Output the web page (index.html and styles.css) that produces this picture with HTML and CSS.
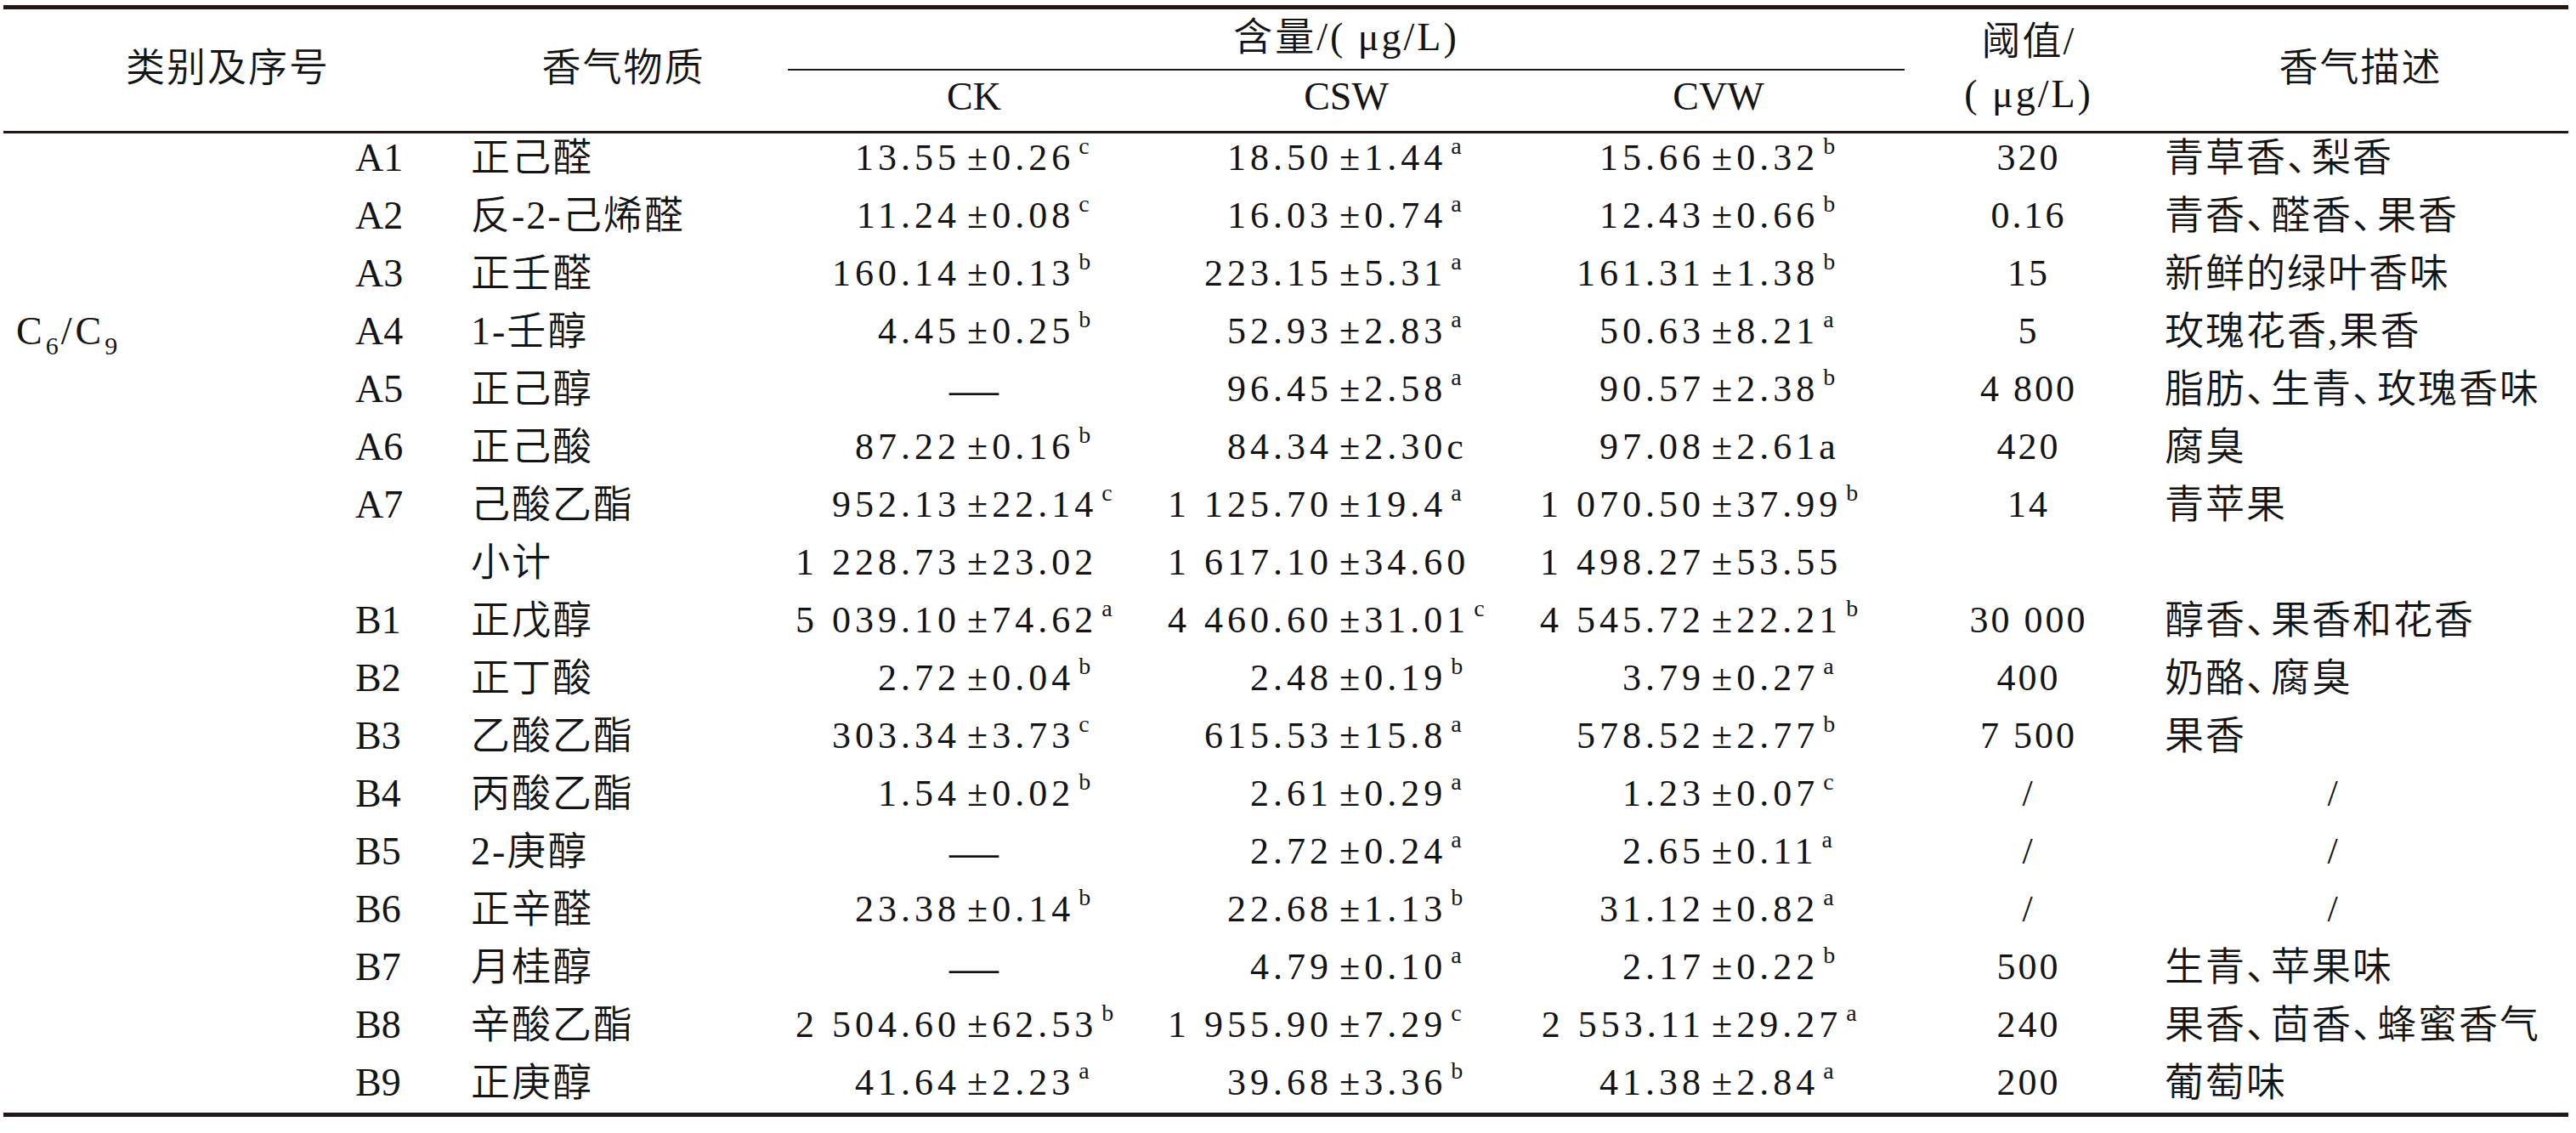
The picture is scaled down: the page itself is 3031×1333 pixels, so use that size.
FILE: index.html
```html
<!DOCTYPE html>
<html lang="zh-CN">
<head>
<meta charset="utf-8">
<title>香气物质含量</title>
<link rel="stylesheet" href="styles.css">
</head>
<body>
<div class="sheet">
  <div class="thead">
    <div class="th h-cat">类别及序号</div>
    <div class="th h-name">香气物质</div>
    <div class="th h-group"><span>含量/( μg/L)</span></div>
    <div class="th h-thr"><span>阈值/</span><span class="unit">( μg/L)</span></div>
    <div class="th h-desc">香气描述</div>
    <div class="th h-sub c-ck">CK</div>
    <div class="th h-sub c-csw">CSW</div>
    <div class="th h-sub c-cvw">CVW</div>
  </div>

  <div class="tbody">
    <div class="td cat"><span class="formula">C<sub>6</sub>/C<sub>9</sub></span></div>

    <div class="tr">
      <div class="td seq">A1</div><div class="td name">正己醛</div>
      <div class="td num c-ck"><span class="lhs">13.55</span><span class="rhs">±0.26<sup>c</sup></span></div>
      <div class="td num c-csw"><span class="lhs">18.50</span><span class="rhs">±1.44<sup>a</sup></span></div>
      <div class="td num c-cvw"><span class="lhs">15.66</span><span class="rhs">±0.32<sup>b</sup></span></div>
      <div class="td thr">320</div><div class="td desc"><span>青草香<span class="dun">、</span>梨香</span></div>
    </div>
    <div class="tr">
      <div class="td seq">A2</div><div class="td name">反-2-己烯醛</div>
      <div class="td num c-ck"><span class="lhs">11.24</span><span class="rhs">±0.08<sup>c</sup></span></div>
      <div class="td num c-csw"><span class="lhs">16.03</span><span class="rhs">±0.74<sup>a</sup></span></div>
      <div class="td num c-cvw"><span class="lhs">12.43</span><span class="rhs">±0.66<sup>b</sup></span></div>
      <div class="td thr">0.16</div><div class="td desc"><span>青香<span class="dun">、</span>醛香<span class="dun">、</span>果香</span></div>
    </div>
    <div class="tr">
      <div class="td seq">A3</div><div class="td name">正壬醛</div>
      <div class="td num c-ck"><span class="lhs">160.14</span><span class="rhs">±0.13<sup>b</sup></span></div>
      <div class="td num c-csw"><span class="lhs">223.15</span><span class="rhs">±5.31<sup>a</sup></span></div>
      <div class="td num c-cvw"><span class="lhs">161.31</span><span class="rhs">±1.38<sup>b</sup></span></div>
      <div class="td thr">15</div><div class="td desc"><span>新鲜的绿叶香味</span></div>
    </div>
    <div class="tr">
      <div class="td seq">A4</div><div class="td name">1-壬醇</div>
      <div class="td num c-ck"><span class="lhs">4.45</span><span class="rhs">±0.25<sup>b</sup></span></div>
      <div class="td num c-csw"><span class="lhs">52.93</span><span class="rhs">±2.83<sup>a</sup></span></div>
      <div class="td num c-cvw"><span class="lhs">50.63</span><span class="rhs">±8.21<sup>a</sup></span></div>
      <div class="td thr">5</div><div class="td desc"><span>玫瑰花香<span class="comma">,</span>果香</span></div>
    </div>
    <div class="tr">
      <div class="td seq">A5</div><div class="td name">正己醇</div>
      <div class="td dash c-ck">—</div>
      <div class="td num c-csw"><span class="lhs">96.45</span><span class="rhs">±2.58<sup>a</sup></span></div>
      <div class="td num c-cvw"><span class="lhs">90.57</span><span class="rhs">±2.38<sup>b</sup></span></div>
      <div class="td thr">4 800</div><div class="td desc"><span>脂肪<span class="dun">、</span>生青<span class="dun">、</span>玫瑰香味</span></div>
    </div>
    <div class="tr">
      <div class="td seq">A6</div><div class="td name">正己酸</div>
      <div class="td num c-ck"><span class="lhs">87.22</span><span class="rhs">±0.16<sup>b</sup></span></div>
      <div class="td num c-csw"><span class="lhs">84.34</span><span class="rhs">±2.30c</span></div>
      <div class="td num c-cvw"><span class="lhs">97.08</span><span class="rhs">±2.61a</span></div>
      <div class="td thr">420</div><div class="td desc"><span>腐臭</span></div>
    </div>
    <div class="tr">
      <div class="td seq">A7</div><div class="td name">己酸乙酯</div>
      <div class="td num c-ck"><span class="lhs">952.13</span><span class="rhs">±22.14<sup>c</sup></span></div>
      <div class="td num c-csw"><span class="lhs">1 125.70</span><span class="rhs">±19.4<sup>a</sup></span></div>
      <div class="td num c-cvw"><span class="lhs">1 070.50</span><span class="rhs">±37.99<sup>b</sup></span></div>
      <div class="td thr">14</div><div class="td desc"><span>青苹果</span></div>
    </div>
    <div class="tr">
      <div class="td seq"></div><div class="td name">小计</div>
      <div class="td num c-ck"><span class="lhs">1 228.73</span><span class="rhs">±23.02</span></div>
      <div class="td num c-csw"><span class="lhs">1 617.10</span><span class="rhs">±34.60</span></div>
      <div class="td num c-cvw"><span class="lhs">1 498.27</span><span class="rhs">±53.55</span></div>
      <div class="td thr"></div><div class="td desc"></div>
    </div>
    <div class="tr">
      <div class="td seq">B1</div><div class="td name">正戊醇</div>
      <div class="td num c-ck"><span class="lhs">5 039.10</span><span class="rhs">±74.62<sup>a</sup></span></div>
      <div class="td num c-csw"><span class="lhs">4 460.60</span><span class="rhs">±31.01<sup>c</sup></span></div>
      <div class="td num c-cvw"><span class="lhs">4 545.72</span><span class="rhs">±22.21<sup>b</sup></span></div>
      <div class="td thr">30 000</div><div class="td desc"><span>醇香<span class="dun">、</span>果香和花香</span></div>
    </div>
    <div class="tr">
      <div class="td seq">B2</div><div class="td name">正丁酸</div>
      <div class="td num c-ck"><span class="lhs">2.72</span><span class="rhs">±0.04<sup>b</sup></span></div>
      <div class="td num c-csw"><span class="lhs">2.48</span><span class="rhs">±0.19<sup>b</sup></span></div>
      <div class="td num c-cvw"><span class="lhs">3.79</span><span class="rhs">±0.27<sup>a</sup></span></div>
      <div class="td thr">400</div><div class="td desc"><span>奶酪<span class="dun">、</span>腐臭</span></div>
    </div>
    <div class="tr">
      <div class="td seq">B3</div><div class="td name">乙酸乙酯</div>
      <div class="td num c-ck"><span class="lhs">303.34</span><span class="rhs">±3.73<sup>c</sup></span></div>
      <div class="td num c-csw"><span class="lhs">615.53</span><span class="rhs">±15.8<sup>a</sup></span></div>
      <div class="td num c-cvw"><span class="lhs">578.52</span><span class="rhs">±2.77<sup>b</sup></span></div>
      <div class="td thr">7 500</div><div class="td desc"><span>果香</span></div>
    </div>
    <div class="tr">
      <div class="td seq">B4</div><div class="td name">丙酸乙酯</div>
      <div class="td num c-ck"><span class="lhs">1.54</span><span class="rhs">±0.02<sup>b</sup></span></div>
      <div class="td num c-csw"><span class="lhs">2.61</span><span class="rhs">±0.29<sup>a</sup></span></div>
      <div class="td num c-cvw"><span class="lhs">1.23</span><span class="rhs">±0.07<sup>c</sup></span></div>
      <div class="td thr">/</div><div class="td desc none">/</div>
    </div>
    <div class="tr">
      <div class="td seq">B5</div><div class="td name">2-庚醇</div>
      <div class="td dash c-ck">—</div>
      <div class="td num c-csw"><span class="lhs">2.72</span><span class="rhs">±0.24<sup>a</sup></span></div>
      <div class="td num c-cvw"><span class="lhs">2.65</span><span class="rhs">±0.11<sup>a</sup></span></div>
      <div class="td thr">/</div><div class="td desc none">/</div>
    </div>
    <div class="tr">
      <div class="td seq">B6</div><div class="td name">正辛醛</div>
      <div class="td num c-ck"><span class="lhs">23.38</span><span class="rhs">±0.14<sup>b</sup></span></div>
      <div class="td num c-csw"><span class="lhs">22.68</span><span class="rhs">±1.13<sup>b</sup></span></div>
      <div class="td num c-cvw"><span class="lhs">31.12</span><span class="rhs">±0.82<sup>a</sup></span></div>
      <div class="td thr">/</div><div class="td desc none">/</div>
    </div>
    <div class="tr">
      <div class="td seq">B7</div><div class="td name">月桂醇</div>
      <div class="td dash c-ck">—</div>
      <div class="td num c-csw"><span class="lhs">4.79</span><span class="rhs">±0.10<sup>a</sup></span></div>
      <div class="td num c-cvw"><span class="lhs">2.17</span><span class="rhs">±0.22<sup>b</sup></span></div>
      <div class="td thr">500</div><div class="td desc"><span>生青<span class="dun">、</span>苹果味</span></div>
    </div>
    <div class="tr">
      <div class="td seq">B8</div><div class="td name">辛酸乙酯</div>
      <div class="td num c-ck"><span class="lhs">2 504.60</span><span class="rhs">±62.53<sup>b</sup></span></div>
      <div class="td num c-csw"><span class="lhs">1 955.90</span><span class="rhs">±7.29<sup>c</sup></span></div>
      <div class="td num c-cvw"><span class="lhs">2 553.11</span><span class="rhs">±29.27<sup>a</sup></span></div>
      <div class="td thr">240</div><div class="td desc"><span>果香<span class="dun">、</span>茴香<span class="dun">、</span>蜂蜜香气</span></div>
    </div>
    <div class="tr">
      <div class="td seq">B9</div><div class="td name">正庚醇</div>
      <div class="td num c-ck"><span class="lhs">41.64</span><span class="rhs">±2.23<sup>a</sup></span></div>
      <div class="td num c-csw"><span class="lhs">39.68</span><span class="rhs">±3.36<sup>b</sup></span></div>
      <div class="td num c-cvw"><span class="lhs">41.38</span><span class="rhs">±2.84<sup>a</sup></span></div>
      <div class="td thr">200</div><div class="td desc"><span>葡萄味</span></div>
    </div>
  </div>
</div>
</body>
</html>
```

FILE: styles.css
```css
html, body {
  margin: 0;
  padding: 0;
  background: #ffffff;
}

body {
  font-family: "Liberation Serif", "Noto Sans CJK SC", serif;
  font-size: 46px;
  font-weight: 350;
  line-height: 1;
  color: #141414;
}

.sheet {
  width: 3018px;
  margin: 6px 0 0 4px;
}

.thead,
.tbody {
  display: grid;
  grid-template-columns: 400px 136px 387px 438px 438px 438px 292px 489px;
}

/* ---------- header ---------- */
.thead {
  grid-template-rows: 72px 71px;
  border-top: 5px solid #231815;
  border-bottom: 3px solid #231815;
}

.th {
  display: flex;
  align-items: center;
  justify-content: center;
  letter-spacing: 2px;
  padding-bottom: 6px;
  box-sizing: border-box;
  white-space: pre;
}

.h-cat  { grid-column: 1 / 3; grid-row: 1 / 3; padding-right: 8px; }
.h-name { grid-column: 3;     grid-row: 1 / 3; }
.h-thr  { grid-column: 7;     grid-row: 1 / 3; flex-direction: column; gap: 16px; }
.h-desc { grid-column: 8;     grid-row: 1 / 3; }

.h-thr .unit {
  letter-spacing: 3px;
}

.h-group {
  grid-column: 4 / 7;
  grid-row: 1;
  border-bottom: 2px solid #231815;
  letter-spacing: 3px;
  padding-bottom: 4px;
}

.h-sub {
  grid-row: 2;
  letter-spacing: 0;
  padding-bottom: 10px;
}

.c-ck  { grid-column: 4; }
.c-csw { grid-column: 5; }
.c-cvw { grid-column: 6; }

/* ---------- body ---------- */
.tbody {
  grid-template-rows: repeat(17, 68px);
  margin-top: -4px;
  border-bottom: 5px solid #231815;
}

.tr {
  display: contents;
}

.td {
  display: flex;
  align-items: center;
  white-space: nowrap;
  padding-bottom: 2px;
  box-sizing: border-box;
}

.cat {
  grid-column: 1;
  grid-row: 1 / span 7;
  padding-left: 15px;
  letter-spacing: 4px;
}

.cat sub {
  font-size: 30px;
  line-height: 0;
  vertical-align: -12px;
  letter-spacing: 3px;
}

.seq {
  grid-column: 2;
  padding-left: 14px;
}

.name {
  grid-column: 3;
  padding-left: 14px;
  letter-spacing: 2px;
}

.num {
  display: grid;
  grid-template-columns: calc(50% - 8px) 1fr;
  align-items: center;
  font-size: 44px;
  letter-spacing: 5px;
}

.lhs {
  text-align: right;
  padding-right: 8px;
}

.rhs {
  text-align: left;
}

.num sup {
  font-size: 28px;
  line-height: 0;
  vertical-align: 19px;
  letter-spacing: 0;
  margin-left: 5px;
}

.dash {
  justify-content: center;
  font-size: 58px;
}

.thr {
  grid-column: 7;
  justify-content: center;
  font-size: 44px;
  letter-spacing: 3px;
}

.desc {
  grid-column: 8;
  padding-left: 14px;
  letter-spacing: 2px;
}

.desc.none {
  justify-content: center;
  padding-left: 0;
  padding-right: 64px;
  font-size: 44px;
}

.dun {
  font-feature-settings: "halt";
  letter-spacing: 6px;
}

.comma {
  letter-spacing: 0;
  margin-right: 2px;
}
```
